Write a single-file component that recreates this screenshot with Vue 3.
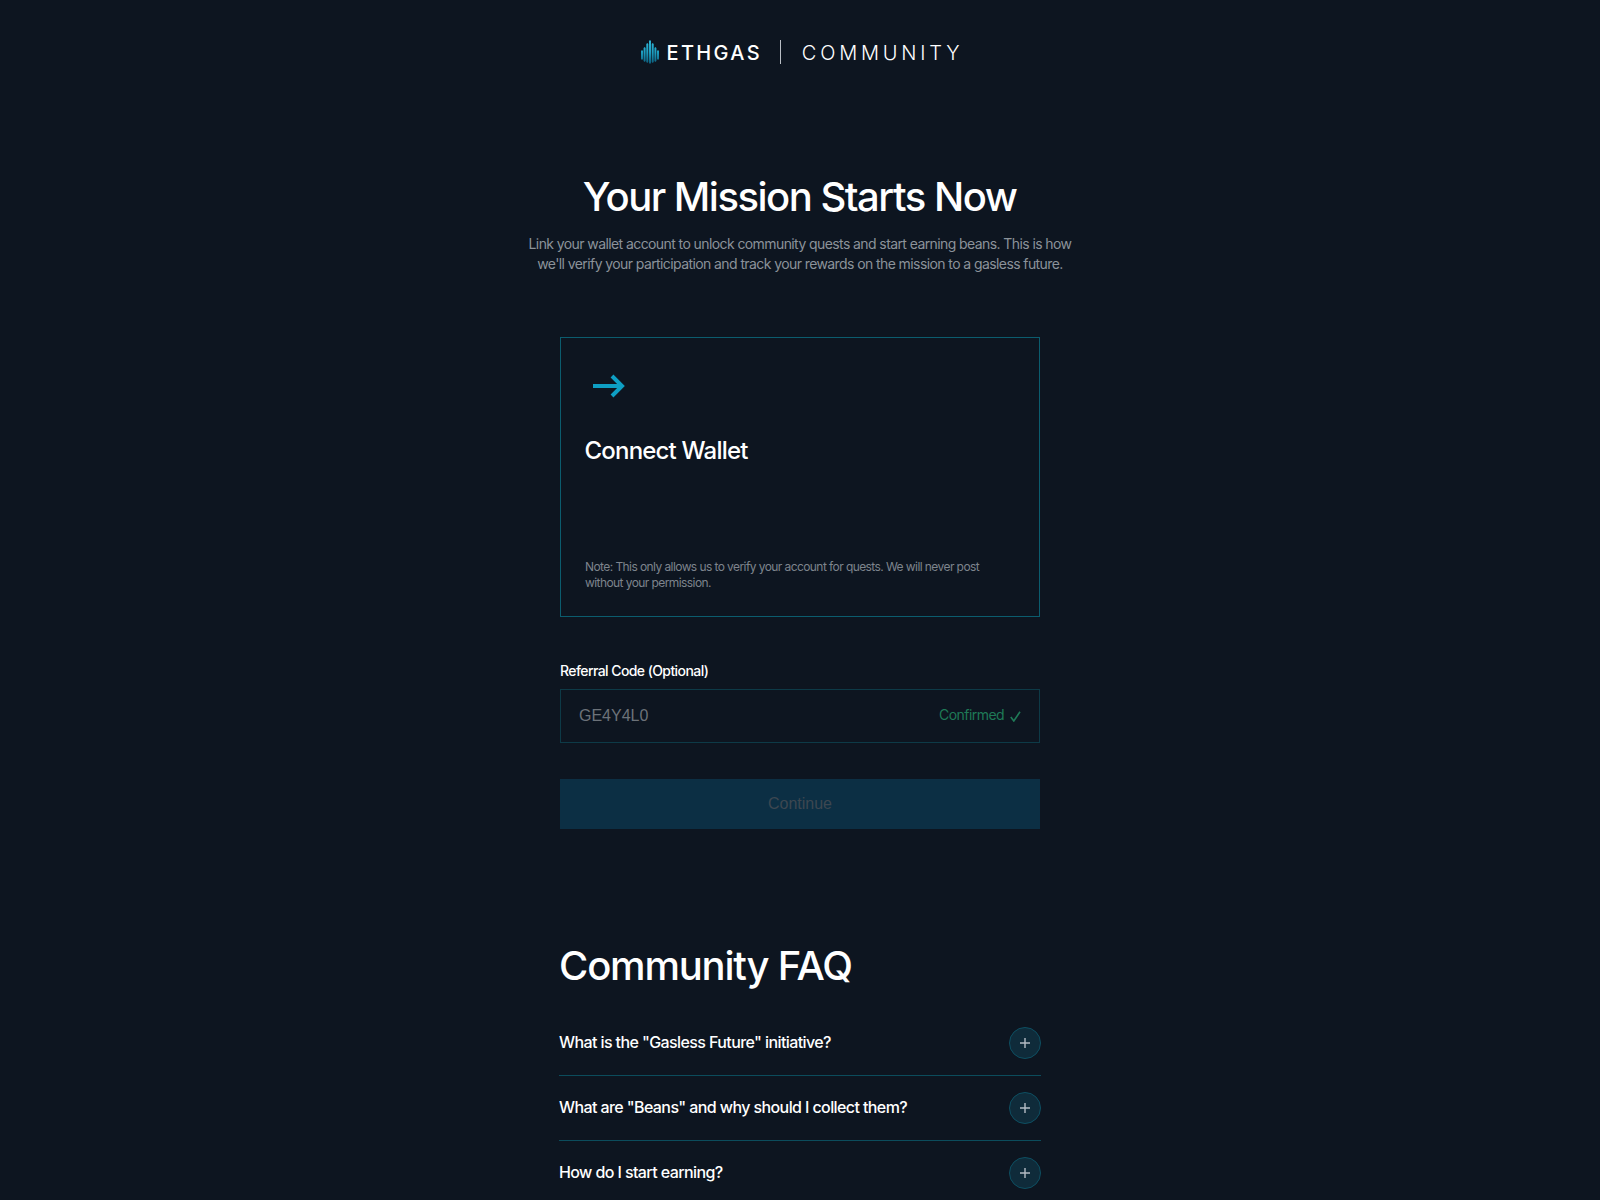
<template>
  <div class="page">
    <header class="brand">
      <svg class="brand-mark" width="18" height="24" viewBox="0 0 18 24">
        <defs>
          <linearGradient id="markFill" x1="0" y1="0" x2="0" y2="24" gradientUnits="userSpaceOnUse">
            <stop offset="0" stop-color="#2fb6d6" />
            <stop offset="0.5" stop-color="#1d9fc2" />
            <stop offset="1" stop-color="#0a5a78" />
          </linearGradient>
        </defs>
        <path v-for="bar in markBars" :key="bar.x" :d="bar.d" fill="url(#markFill)" />
      </svg>
      <span class="brand-name">ETHGAS</span>
      <span class="brand-rule"></span>
      <span class="brand-section">COMMUNITY</span>
    </header>

    <main class="main">
      <h1 class="title">Your Mission Starts Now</h1>
      <p class="lead">
        Link your wallet account to unlock community quests and start earning beans. This is how<br />
        we'll verify your participation and track your rewards on the mission to a gasless future.
      </p>

      <div class="column">
        <section class="card">
          <svg class="arrow" width="34" height="26" viewBox="0 0 34 26" fill="none">
            <path d="M0 13H29M19 3L29 13L19 23" stroke="#0e9fc4" stroke-width="4" />
          </svg>
          <h2 class="card-title">Connect Wallet</h2>
          <p class="card-note">
            Note: This only allows us to verify your account for quests. We will never post without your permission.
          </p>
        </section>

        <label class="field-label">Referral Code (Optional)</label>
        <div class="field">
          <span class="field-value">GE4Y4L0</span>
          <span class="field-status">
            <span class="field-status-text">Confirmed</span>
            <svg width="11" height="11" viewBox="0 0 11 11" fill="none">
              <path d="M0.800 6L3.800 10L10 0.800" stroke="#1f7a57" stroke-width="1.600" />
            </svg>
          </span>
        </div>

        <button class="continue" type="button" disabled>Continue</button>

        <h2 class="faq-title">Community FAQ</h2>
        <div class="faq">
          <div v-for="q in questions" :key="q" class="faq-row">
            <span class="faq-q">{{ q }}</span>
            <span class="faq-toggle">
              <svg width="10" height="10" viewBox="0 0 10 10">
                <path d="M5 0v10M0 5h10" stroke="#b4bcc4" stroke-width="1.400" />
              </svg>
            </span>
          </div>
        </div>
      </div>
    </main>
  </div>
</template>

<script setup>
const heights = [
  [0, 10, 20],
  [2.6, 7, 22],
  [5.3, 3, 23],
  [8, 0, 24],
  [10.700, 3, 23],
  [13.400, 7, 22],
  [16, 10, 20],
]

const markBars = heights.map(([x, top, bottom]) => ({
  x,
  d: `M${x} ${top + 1}l1 -1l1 1v${bottom - top - 2}l-1 1l-1 -1z`,
}))

const questions = [
  'What is the "Gasless Future" initiative?',
  'What are "Beans" and why should I collect them?',
  'How do I start earning?',
]
</script>

<style>
html,
body {
  margin: 0;
  background: #0d1520;
}
</style>

<style scoped>
.page {
  height: 1200px;
  overflow: hidden;
  background: #0d1520;
  color: #fff;
  font-family: Inter, "Liberation Sans", sans-serif;
}

.brand {
  display: flex;
  justify-content: center;
  align-items: center;
  height: 24px;
  padding-top: 40px;
  padding-left: 4px;
}

.brand-mark {
  margin-right: 8px;
}

.brand-name {
  padding-top: 2px;
  font-size: 20px;
  font-weight: 500;
  letter-spacing: 2.300px;
}

.brand-rule {
  width: 1px;
  height: 24px;
  margin: 0 21px 0 18px;
  background: #b9bec4;
}

.brand-section {
  padding-top: 2px;
  font-size: 20px;
  font-weight: 300;
  letter-spacing: 3.800px;
}

.main {
  display: flex;
  flex-direction: column;
  align-items: center;
  padding-top: 108px;
}

.title {
  margin: 0 1px 0 0;
  font-size: 40px;
  line-height: 50px;
  font-weight: 500;
  letter-spacing: -1.500px;
}

.lead {
  margin: 12px 0 0;
  font-size: 14px;
  line-height: 20px;
  text-align: center;
  letter-spacing: -0.590px;
  color: #8b929a;
}

.column {
  display: flex;
  flex-direction: column;
  width: 480px;
  margin-top: 63px;
}

.card {
  box-sizing: border-box;
  display: flex;
  flex-direction: column;
  height: 280px;
  padding: 35px 24px 25px;
  border: 1px solid #0b5c6e;
}

.arrow {
  margin-left: 8px;
}

.card-title {
  margin: 36px 0 0 -0.500px;
  font-size: 24px;
  line-height: 32px;
  font-weight: 500;
  letter-spacing: -0.800px;
}

.card-note {
  margin: auto 0 0;
  font-size: 12px;
  line-height: 16px;
  letter-spacing: -0.580px;
  color: #7d848d;
}

.field-label {
  margin-top: 44px;
  font-size: 14px;
  line-height: 20px;
  font-weight: 500;
  letter-spacing: -0.580px;
}

.field {
  box-sizing: border-box;
  display: flex;
  justify-content: space-between;
  align-items: center;
  height: 54px;
  margin-top: 8px;
  padding: 0 18px;
  border: 1px solid #0d3a47;
}

.field-value {
  font-family: "Liberation Sans", Arial, sans-serif;
  font-size: 16px;
  color: #6c7279;
}

.field-status {
  display: flex;
  align-items: center;
  gap: 6px;
  font-size: 14px;
  letter-spacing: -0.560px;
  color: #1f7a57;
}

.field-status-text {
  padding-bottom: 3px;
}

.continue {
  height: 50px;
  margin-top: 36px;
  border: 0;
  padding: 0;
  background: #0c2f44;
  color: #3d4751;
  font-family: "Liberation Sans", Arial, sans-serif;
  font-size: 16px;
}

.faq-title {
  margin: 112px -1px 0;
  font-size: 40px;
  line-height: 50px;
  font-weight: 500;
  letter-spacing: -1.200px;
}

.faq {
  margin: 20px -1px 0;
}

.faq-row {
  box-sizing: border-box;
  display: flex;
  justify-content: space-between;
  align-items: center;
  height: 65px;
  border-bottom: 1px solid #0b4c5c;
}

.faq-q {
  padding-bottom: 2px;
  font-size: 16px;
  font-weight: 500;
  letter-spacing: -0.600px;
}

.faq-toggle {
  display: flex;
  justify-content: center;
  align-items: center;
  box-sizing: border-box;
  width: 32px;
  height: 32px;
  border: 1px solid #0d4f62;
  border-radius: 50%;
  background: #0f2b3a;
}
</style>
